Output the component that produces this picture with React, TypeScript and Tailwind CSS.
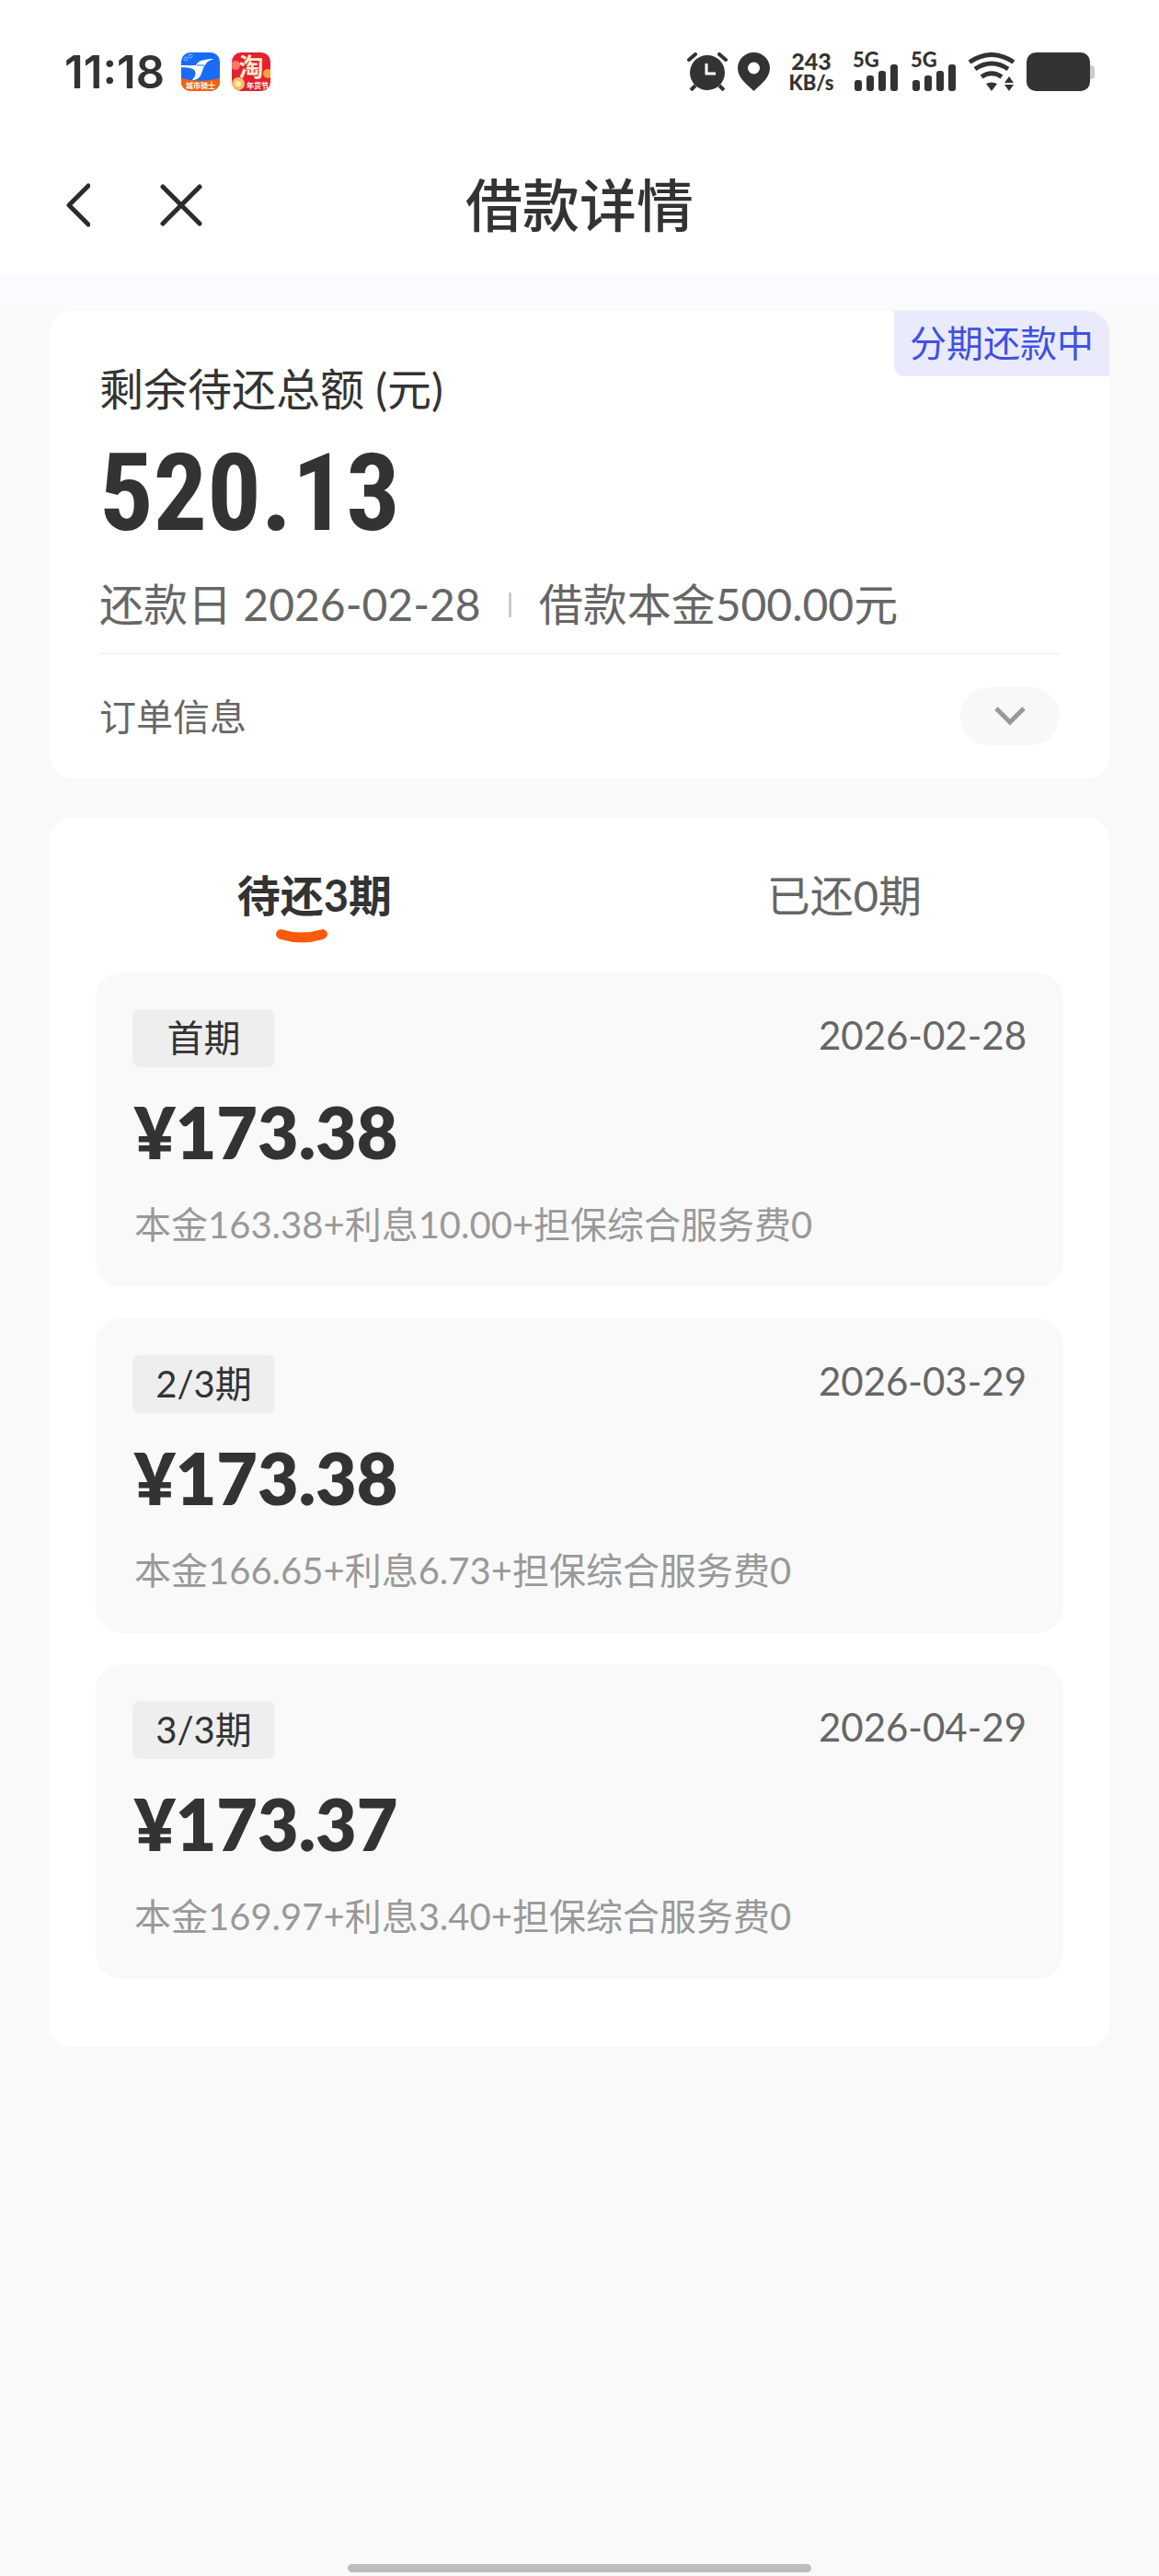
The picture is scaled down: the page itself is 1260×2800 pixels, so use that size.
import { useState } from "react";

const installments = [
    { tag: "首期", date: "2026-02-28", amount: "173.38", detail: "本金163.38+利息10.00+担保综合服务费0" },
    { tag: "2/3期", date: "2026-03-29", amount: "173.38", detail: "本金166.65+利息6.73+担保综合服务费0" },
    { tag: "3/3期", date: "2026-04-29", amount: "173.37", detail: "本金169.97+利息3.40+担保综合服务费0" },
];

function RiderIcon() {
    return (
        <svg className="size-[42px]" viewBox="0 0 42 42">
            <defs>
                <clipPath id="rider">
                    <rect width="42" height="42" rx="10" />
                </clipPath>
            </defs>
            <g clipPath="url(#rider)">
                <rect width="42" height="42" fill="#1a6cf5" />
                <circle cx="5" cy="7" r="2" fill="none" stroke="#8bb8fb" />
                <circle cx="10" cy="4" r="2" fill="none" stroke="#8bb8fb" />
                <path d="M0 14H16C18 9 25 7 36 7C31 8 28 10 25 15C22 21 22 27 17 29L11 31C15 27 17 22 14 19C11 16 5 17 0 16Z" fill="#fff" />
                <path d="M17 14H25" stroke="#1a6cf5" strokeWidth="1" />
                <path d="M0 28Q20 34 42 28V42H0Z" fill="#f4640c" />
                <text x="21" y="39" textAnchor="middle" fontSize="8" fontWeight="700" fill="#fff">城市骑士</text>
            </g>
        </svg>
    );
}

function TaoIcon() {
    return (
        <svg className="size-[42px]" viewBox="0 0 42 42">
            <defs>
                <clipPath id="tao">
                    <rect width="42" height="42" rx="10" />
                </clipPath>
            </defs>
            <g clipPath="url(#tao)">
                <rect width="42" height="42" fill="#e5202f" />
                <circle cx="4" cy="14" r="5" fill="#f7766a" />
                <circle cx="39" cy="23" r="5" fill="#f9a13f" />
                <circle cx="7" cy="34" r="7" fill="#fbc069" />
                <circle cx="7" cy="34" r="3" fill="#fff0b8" />
                <text x="21" y="26" textAnchor="middle" fontSize="27" fontWeight="700" fill="#fdeecb">淘</text>
                <text x="28" y="39" textAnchor="middle" fontSize="8" fontWeight="700" fill="#fff">年货节</text>
            </g>
        </svg>
    );
}

function AlarmIcon() {
    return (
        <svg className="h-[42px] w-[44px]" viewBox="0 0 44 42" fill="none" stroke="#333">
            <path d="M2 8L9 2M35 2L42 8" strokeWidth="4" strokeLinecap="round" />
            <path d="M9 36L4 41M35 36L40 41" strokeWidth="4" />
            <circle cx="22" cy="22" r="19" fill="#333" stroke="none" />
            <path d="M21 12V23H31" stroke="#fff" strokeWidth="3" />
        </svg>
    );
}

function PinIcon() {
    return (
        <svg className="h-[42px] w-[35px]" viewBox="0 0 35 42">
            <path
                fillRule="evenodd"
                d="M17.500 0C7.800 0 0 7.600 0 17C0 27 8 33 17.500 42C27 33 35 27 35 17C35 7.600 27.200 0 17.500 0ZM17.500 10.500A6.500 6.500 0 1 1 17.500 23.500A6.500 6.500 0 1 1 17.500 10.500Z"
                fill="#333"
            />
        </svg>
    );
}

function Signal() {
    return (
        <div className="relative h-[42px] w-[50px]">
            <span className="absolute -top-1 left-0 text-[22px] leading-6 font-black">5G</span>
            <svg className="h-[42px] w-[50px]" viewBox="0 0 50 42" fill="#333">
                <rect x="2" y="30" width="8" height="12" rx="3" />
                <rect x="15" y="25" width="8" height="17" rx="3" />
                <rect x="28" y="20" width="8" height="22" rx="3" />
                <rect x="41" y="13" width="8" height="29" rx="3" />
            </svg>
        </div>
    );
}

function WifiIcon() {
    return (
        <svg className="h-[42px] w-[52px]" viewBox="0 0 52 42" fill="none" stroke="#333" strokeWidth="5">
            <path d="M2 10.500Q26 -5.500 50 10.500" />
            <path d="M8 18Q26 6 44 18" />
            <path d="M15 26.500Q26 19 37 26.500" />
            <path d="M20 34Q26 31 32 34L26 42Z" fill="#333" stroke="none" />
            <path d="M45 26L50 33H40ZM45 42L50 35H40Z" fill="#333" stroke="none" />
        </svg>
    );
}

function StatusBar() {
    return (
        <div className="flex items-center justify-between px-[70px] pt-[57px]">
            <div className="flex h-[42px] items-center">
                <span className="mr-[18px] font-[Inter] text-[49px] leading-none font-semibold">11:18</span>
                <div className="flex gap-[13px]">
                    <RiderIcon />
                    <TaoIcon />
                </div>
            </div>
            <div className="flex h-[42px] items-center">
                <AlarmIcon />
                <div className="ml-[11px]">
                    <PinIcon />
                </div>
                <div className="ml-[18px] w-[54px] text-center font-black">
                    <div className="text-[25px] leading-6">243</div>
                    <div className="text-[22px] leading-6">KB/s</div>
                </div>
                <div className="mr-[12px] ml-[18px] flex gap-[13px]">
                    <Signal />
                    <Signal />
                </div>
                <WifiIcon />
                <div className="ml-[12px] h-[42px] w-[69px] rounded-[10px] bg-[#333]" />
                <div className="h-[15px] w-[5px] rounded-r-sm bg-[#ccc]" />
            </div>
        </div>
    );
}

function NavBar() {
    return (
        <div className="grid grid-cols-3 items-center px-[62px] pt-[84px] pb-[35px]">
            <div className="flex items-center gap-[68px]">
                <button aria-label="返回" className="p-2">
                    <svg className="h-[48px] w-[28px]" viewBox="0 0 28 48" fill="none" stroke="#2b2b2b" strokeWidth="5" strokeLinecap="round" strokeLinejoin="round">
                        <path d="M26 3L5 24L26 45" />
                    </svg>
                </button>
                <button aria-label="关闭">
                    <svg className="size-[46px]" viewBox="0 0 46 46" fill="none" stroke="#2b2b2b" strokeWidth="5" strokeLinecap="round">
                        <path d="M3 3L43 43M43 3L3 43" />
                    </svg>
                </button>
            </div>
            <h1 className="text-center text-[62px] leading-[80px] font-medium whitespace-nowrap">借款详情</h1>
        </div>
    );
}

function LoanSummary() {
    const [open, setOpen] = useState(false);

    return (
        <section className="relative rounded-3xl bg-white px-[54px] pt-[52px]">
            <span className="absolute top-0 right-0 rounded-tr-3xl rounded-bl-xl bg-[#e9ebfc] px-[17px] text-[40px] leading-[71px] text-[#3f51e3]">
                分期还款中
            </span>
            <p className="text-[48px] leading-[66px]">剩余待还总额 (元)</p>
            <p className="mt-[20px] font-['Roboto_Condensed',Roboto,sans-serif] text-[116px] leading-[120px] font-bold">520.13</p>
            <div className="mt-[28px] flex items-center pb-[20px] text-[48px] leading-[66px] text-[#666]">
                <span>还款日 2026-02-28</span>
                <span className="mx-[30px] h-[27px] w-[3px] bg-[#ccc]" />
                <span>借款本金500.00元</span>
            </div>
            <div className="flex items-center justify-between border-t border-[#eee] py-9">
                <span className="text-[40px] leading-[60px] text-[#666]">订单信息</span>
                <button
                    aria-label="展开订单信息"
                    aria-expanded={open}
                    onClick={() => setOpen(!open)}
                    className="flex h-[63px] w-[108px] items-center justify-center rounded-full bg-[#f8f8f8]"
                >
                    <svg className="h-[22px] w-[36px]" viewBox="0 0 36 22" fill="none" stroke="#999" strokeWidth="5">
                        <path d="M3 2L18 17L33 2" />
                    </svg>
                </button>
            </div>
        </section>
    );
}

function InstallmentCard({ tag, date, amount, detail }: (typeof installments)[number]) {
    return (
        <li className="rounded-[28px] bg-[#f9f9f9] px-[40px] pt-[40px] pb-[38px]">
            <div className="flex items-start justify-between">
                <span className="w-[155px] rounded-lg bg-[#eee] text-center text-[40px] leading-[63px]">{tag}</span>
                <span className="text-[42px] leading-[56px] text-[#666]">{date}</span>
            </div>
            <p className="mt-[20px] ml-[2px] text-[77px] leading-[100px] font-extrabold">¥{amount}</p>
            <p className="mt-[21px] ml-[2px] text-[40px] leading-[60px] text-[#999]">{detail}</p>
        </li>
    );
}

function Repayments() {
    const [tab, setTab] = useState("due");

    const tabs = [
        { id: "due", label: "待还3期" },
        { id: "paid", label: "已还0期" },
    ];

    return (
        <section className="mt-[43px] rounded-3xl bg-white px-[50px] pb-[74px]">
            <div role="tablist" className="-mx-[50px] grid h-[168px] grid-cols-2">
                {tabs.map((t) => (
                    <button
                        key={t.id}
                        role="tab"
                        aria-selected={tab === t.id}
                        onClick={() => setTab(t.id)}
                        className={tab === t.id ? "flex flex-col items-center pt-[51px] font-bold" : "flex flex-col items-center pt-[51px] text-[#666]"}
                    >
                        <span className="text-[47px] leading-[66px]">{t.label}</span>
                        {tab === t.id && (
                            <svg className="mt-1 mr-7 h-[15px] w-[56px]" viewBox="0 0 56 15" fill="#ff5a0c">
                                <path d="M5 0Q28 7 51 0Q56 1 56 6Q55 10 51 11Q28 18 5 11Q1 10 0 6Q0 1 5 0Z" />
                            </svg>
                        )}
                    </button>
                ))}
            </div>
            {tab === "due" && (
                <ul className="flex flex-col gap-[34px]">
                    {installments.map((item) => (
                        <InstallmentCard key={item.date} {...item} />
                    ))}
                </ul>
            )}
        </section>
    );
}

export default function App() {
    return (
        <div className="flex min-h-screen flex-col bg-[#f9f9f9] font-[Lato,'Noto_Sans_CJK_SC',sans-serif] text-[#333]">
            <header className="border-b-[38px] border-[#fafbff] bg-white">
                <StatusBar />
                <NavBar />
            </header>
            <main className="mt-[2px] px-[54px]">
                <LoanSummary />
                <Repayments />
            </main>
            {/* Home indicator */}
            <div className="mx-auto mt-auto mb-1 h-[9px] w-2/5 rounded-full bg-[#bdbdbd]" />
        </div>
    );
}
